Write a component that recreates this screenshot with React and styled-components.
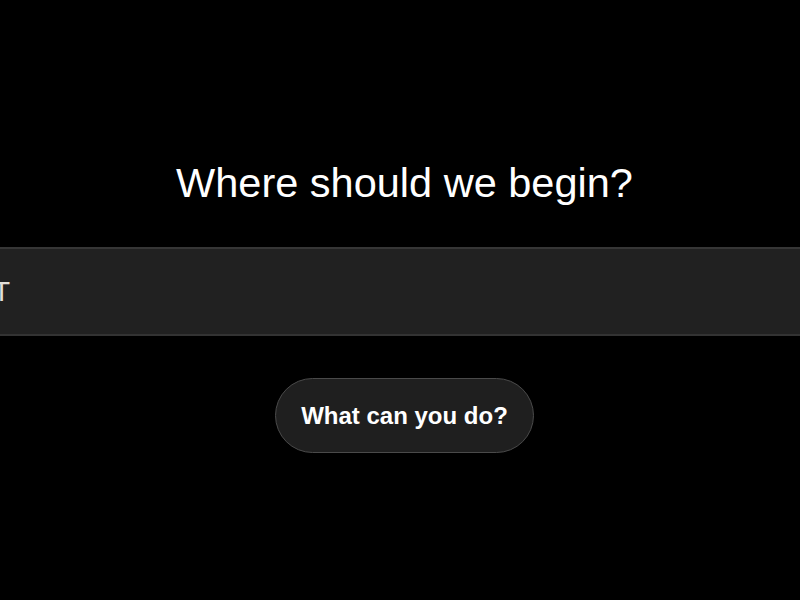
import React from 'react';
import styled, { createGlobalStyle } from 'styled-components';

const Global = createGlobalStyle`
  html, body {
    margin: 0;
    padding: 0;
    background: #000;
    overflow: hidden;
  }
  body {
    font-family: "Liberation Sans", Arial, sans-serif;
    color: #fff;
  }
`;

const Page = styled.div`
  width: 800px;
  height: 600px;
  display: flex;
  flex-direction: column;
  align-items: center;
  padding: 159px 0 0 9px;
  box-sizing: border-box;
  overflow: hidden;
`;

const Heading = styled.h1`
  margin: 0;
  font-size: 41.5px;
  font-weight: 400;
  line-height: 48px;
  color: #fff;
`;

const Composer = styled.div`
  align-self: stretch;
  margin: 40px -20px 0 -29px;
  height: 89px;
  box-sizing: border-box;
  display: flex;
  align-items: center;
  padding-left: 13px;
  background: #212121;
  border-top: 2px solid #363636;
  border-bottom: 2px solid #333;
`;

const Draft = styled.span`
  font-size: 28px;
  line-height: 32px;
  color: #e2dfd8;
`;

const Suggestion = styled.button`
  margin-top: 42px;
  height: 75px;
  padding: 0 25px;
  border-radius: 999px;
  border: 1px solid #4a4a4a;
  background: #1f1f1f;
  color: #fff;
  font-family: "Liberation Sans", Arial, sans-serif;
  font-size: 24px;
  font-weight: 700;
  cursor: pointer;
`;

export default function App() {
  return (
    <>
      <Global />
      <Page>
        <Heading>Where should we begin?</Heading>
        <Composer>
          <Draft>T</Draft>
        </Composer>
        <Suggestion>What can you do?</Suggestion>
      </Page>
    </>
  );
}
